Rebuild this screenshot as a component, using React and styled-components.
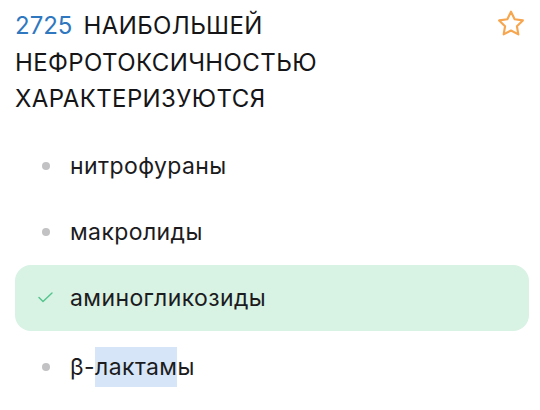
import React from "react";
import styled, { createGlobalStyle } from "styled-components";

const GlobalStyle = createGlobalStyle`
  html, body {
    margin: 0;
    padding: 0;
    background: #ffffff;
  }
  body {
    font-family: Inter, "Noto Sans", sans-serif;
    color: #1c1c1e;
  }
`;

const Card = styled.div`
  width: 540px;
  height: 410px;
  box-sizing: border-box;
  padding: 8px 11px 0 15px;
  overflow: hidden;
`;

const Header = styled.div`
  display: flex;
  align-items: flex-start;
  justify-content: space-between;
`;

const Question = styled.h2`
  margin: 0;
  font-size: 24px;
  font-weight: 400;
  line-height: 36.5px;
  letter-spacing: 0.4px;
  text-transform: uppercase;
  color: #151517;
  max-width: 340px;
`;

const Number = styled.span`
  color: #2f78c0;
  letter-spacing: 0;
  margin-right: 11px;
`;

const StarButton = styled.button`
  border: 0;
  background: none;
  padding: 0;
  margin: 0 2px 0 0;
  width: 32px;
  height: 32px;
  display: flex;
  align-items: center;
  justify-content: center;
  cursor: pointer;
`;

const Options = styled.ul`
  list-style: none;
  margin: 15px 0 0;
  padding: 0;
  display: flex;
  flex-direction: column;
`;

const Option = styled.li`
  display: flex;
  align-items: center;
  height: 66px;
  margin-bottom: ${(p) => (p.$correct ? "3px" : "0")};
  border-radius: 16px;
  background: ${(p) => (p.$correct ? "#d8f2e4" : "transparent")};
  font-size: 23px;
  letter-spacing: 0.4px;
  color: #1c1c1e;
`;

const Marker = styled.span`
  width: 55px;
  flex: none;
  display: flex;
  align-items: center;
  padding-left: 23px;
  box-sizing: border-box;
`;

const Dot = styled.span`
  width: 8px;
  height: 8px;
  border-radius: 50%;
  background: #c2c2c4;
  margin-left: 4px;
`;

const Selected = styled.span`
  background: #d6e6f8;
  padding: 6px 0;
`;

const Star = () => (
  <svg width="32" height="32" viewBox="0 0 24 24" fill="none" stroke="#f7a650" strokeWidth="1.6" strokeLinejoin="round">
    <path d="M12 2.8l2.75 5.6 6.15.9-4.45 4.35 1.05 6.1L12 16.85 6.5 19.75l1.05-6.1L3.1 9.3l6.15-.9z" />
  </svg>
);

const Check = () => (
  <svg width="15" height="11" viewBox="0 0 15 11" fill="none" stroke="#52c48c" strokeWidth="1.4" strokeLinecap="round" strokeLinejoin="round">
    <path d="M1 5.5l4 4L14 1" />
  </svg>
);

const answers = [
  { text: "нитрофураны" },
  { text: "макролиды" },
  { text: "аминогликозиды", correct: true },
  { text: <>β-<Selected>лактам</Selected>ы</> },
];

export default function App() {
  return (
    <>
      <GlobalStyle />
      <Card>
        <Header>
          <Question>
            <Number>2725</Number>
            <span>Наибольшей нефротоксичностью характеризуются</span>
          </Question>
          <StarButton aria-label="В избранное">
            <Star />
          </StarButton>
        </Header>
        <Options>
          {answers.map((a, i) => (
            <Option key={i} $correct={a.correct}>
              <Marker>{a.correct ? <Check /> : <Dot />}</Marker>
              {a.text}
            </Option>
          ))}
        </Options>
      </Card>
    </>
  );
}
